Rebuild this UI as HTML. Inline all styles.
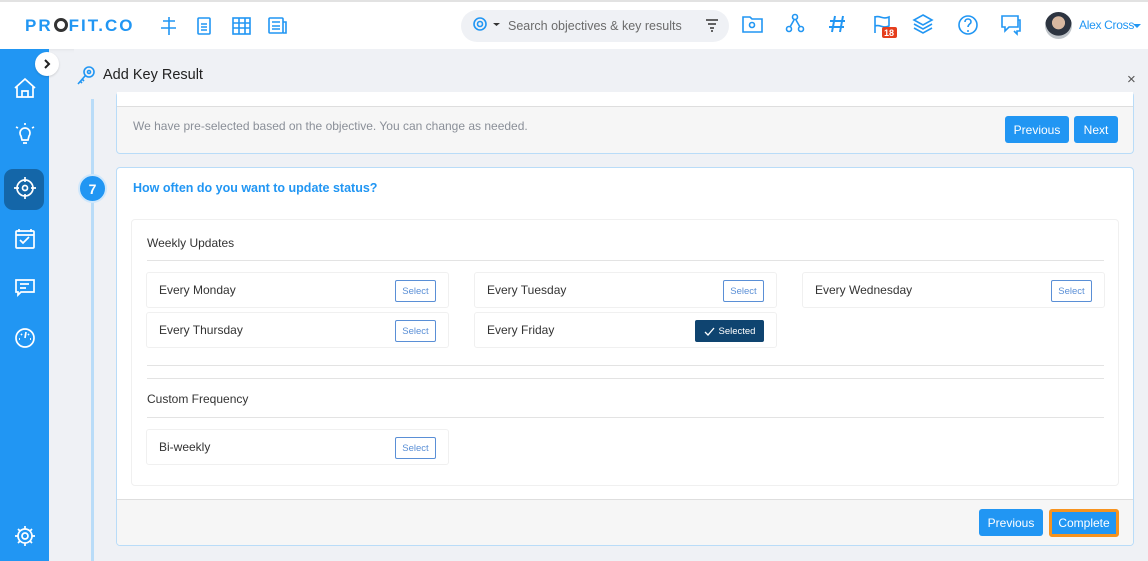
<!DOCTYPE html>
<html><head><meta charset="utf-8"><style>
*{box-sizing:border-box;margin:0;padding:0}
body{width:1148px;height:561px;overflow:hidden;background:#eff1f5;font-family:"Liberation Sans",sans-serif;position:relative;color:#222}
.abs{position:absolute}
.top{left:0;top:0;width:1148px;height:49px;background:#fff;border-top:2px solid #e2e2e2;box-shadow:0 1px 3px rgba(0,0,0,.06)}
.side{left:0;top:49px;width:49px;height:512px;background:#2196f3}
.ic{stroke:#2196f3;fill:none;stroke-width:1.6}
.sic{stroke:#fff;fill:none;stroke-width:1.7}
.card{background:#fff;border:1px solid #b9dcf8;border-radius:4px}
.btn{background:#2196f3;color:#fff;font-size:12px;border-radius:3px;display:flex;align-items:center;justify-content:center}
.item{background:#fff;border:1px solid #f0f0f0;border-radius:3px;height:36px;width:303px;font-size:12px;color:#333;padding-left:12px;display:flex;align-items:center}
.sel{position:absolute;right:12px;top:7px;width:41px;height:22px;border:1px solid #5a8fd6;border-radius:2px;font-size:9.5px;color:#5a8fd6;display:flex;align-items:center;justify-content:center}
.line{height:1px;background:#e3e3e3}
</style></head><body>
<div class="abs top">
 <div class="abs" style="left:25px;top:14px;font-size:17px;font-weight:bold;color:#2196f3;letter-spacing:2px">PR<span style="display:inline-block;width:14px;height:14px;border:3px solid #333;border-radius:50%;vertical-align:-1px;margin:0 1px"></span>FIT.CO</div>
 <svg class="abs" style="left:160px;top:13px" width="140" height="22">
  <g class="ic"><path d="M9 2v18M3 6h12M1 13h15"/><rect x="38" y="3" width="12" height="16" rx="1"/><path d="M41 9h6M41 12h6M41 15h6"/><rect x="73" y="3" width="17" height="16"/><path d="M73 8h17M73 13h17M79 3v16M85 3v16"/><rect x="109" y="3" width="14" height="15" rx="1"/><path d="M123 7h3v11h-3M112 7h8M112 11h8M112 14h8"/></g>
 </svg>
 <div class="abs" style="left:461px;top:8px;width:268px;height:32px;background:#eff1f5;border-radius:16px"></div>
 <svg class="abs" style="left:472px;top:14px" width="30" height="20"><circle cx="8" cy="8" r="6" class="ic"/><circle cx="8" cy="8" r="2.5" class="ic"/><path d="M21 7h7l-3.5 3z" fill="#333"/></svg>
 <div class="abs" style="left:508px;top:17px;font-size:12.5px;color:#6b6b6b">Search objectives &amp; key results</div>
 <svg class="abs" style="left:705px;top:16px" width="14" height="14"><path d="M1 2h12M3 6h8M5 10h4M6 13h2" stroke="#333" stroke-width="1.6"/></svg>
 <svg class="abs" style="left:740px;top:10px" width="290" height="30"><g class="ic">
  <path d="M3 5h7l2 2h10v13H3z"/><circle cx="12" cy="13" r="2.5"/>
  <circle cx="55" cy="5" r="2.5"/><circle cx="49" cy="17" r="2.5"/><circle cx="61" cy="17" r="2.5"/><path d="M54 8l-4 7M56 8l4 7"/>
  <path d="M95 4l-3 16M103 4l-3 16M90 9h15M89 15h15" stroke-width="2"/>
  <path d="M135 4v17M135 5c5-2 8 3 14 0v9c-6 3-9-2-14 0"/>
  <path d="M183 3l9 5-9 5-9-5zM174 12l9 5 9-5M174 16l9 5 9-5"/>
  <circle cx="228" cy="13" r="9"/><path d="M225 10c0-4 6-4 6 0 0 2-3 2-3 5"/>
  <path d="M262 4h16v11h-9l-4 4v-4h-3z"/><path d="M278 8h2v11h-3v3l-3-3"/>
 </g><circle cx="228" cy="19" r="1" fill="#2196f3"/><rect x="142" y="15" width="15" height="11" rx="2" fill="#e53e1d"/><text x="144" y="24" font-size="9" font-weight="bold" fill="#fff" font-family="Liberation Sans">18</text></svg>
 <div class="abs" style="left:1045px;top:10px;width:27px;height:27px;border-radius:50%;background:radial-gradient(circle at 50% 40%,#d8b8a0 0 30%,#2d3440 32% 60%,#bfc4c9 62%)"></div>
 <div class="abs" style="left:1079px;top:16px;font-size:12px;color:#2196f3;letter-spacing:-0.3px">Alex Cross</div>
 <div class="abs" style="left:1133px;top:22px;border:4px solid transparent;border-top-color:#2196f3"></div>
</div>
<div class="abs side"></div>
<div class="abs" style="left:4px;top:169px;width:40px;height:41px;background:#1466a8;border-radius:9px"></div>
<svg class="abs" style="left:10px;top:76px" width="30" height="480"><g class="sic">
 <path d="M5 12l10-9 10 9M7 10v11h16V10M12 21v-6h6v6"/>
 <path d="M11 60a5 5 0 1 1 8 0l-1 4h-6zM13 67h4M15 49v-2M8 52l-2-1M22 52l2-1"/>
 <circle cx="15" cy="112" r="8"/><circle cx="15" cy="112" r="2.5"/><path d="M15 101v5M15 118v5M4 112h5M21 112h5"/>
 <rect x="6" y="155" width="18" height="17" rx="1"/><path d="M6 159h18M10 164l3 3 6-6M9 153v3M21 153v3"/>
 <path d="M6 204h18v12h-13l-3 3v-3h-2z"/><path d="M10 208h9M10 212h6"/>
 <circle cx="15" cy="262" r="9"/><path d="M15 262l1-6M11 258l1 1M19 258l-1 1M9 263h1M20 263h1"/>
 <circle cx="15" cy="460" r="3"/><path d="M15 450v3M15 467v3M5 460h3M22 460h3M8 453l2 2M20 465l2 2M8 467l2-2M20 455l2-2"/><circle cx="15" cy="460" r="7"/>
</g></svg>
<div class="abs" style="left:35px;top:52px;width:24px;height:24px;background:#fff;border-radius:50%;box-shadow:0 1px 2px rgba(0,0,0,.15)"></div>
<svg class="abs" style="left:41px;top:58px" width="12" height="12"><path d="M4 2l4 4-4 4" stroke="#222" stroke-width="2" fill="none"/></svg>
<div class="abs" style="left:74px;top:49px;width:1074px;height:50px;background:#eff1f5"></div>
<svg class="abs" style="left:76px;top:65px" width="22" height="22"><g class="ic"><circle cx="13" cy="7" r="5"/><circle cx="13" cy="7" r="1.5"/><path d="M9 11l-7 8M4 16l2 2M6 14l2 2"/></g></svg>
<div class="abs" style="left:103px;top:67px;font-size:14.5px;color:#222">Add Key Result</div>
<div class="abs" style="left:1127px;top:71px;font-size:15px;color:#555">×</div>
<div class="abs" style="left:91px;top:99px;width:3px;height:462px;background:#b9dcf8"></div>
<div class="abs card" style="left:116px;top:92px;width:1018px;height:62px;border-top:none;background:#f6f6f6">
 <div style="height:15px;background:#fff;border-bottom:1px solid #dedede"></div>
 <div class="abs" style="left:16px;top:27px;font-size:12px;color:#8a8f98">We have pre-selected based on the objective. You can change as needed.</div>
 <div class="abs btn" style="left:888px;top:24px;width:64px;height:27px">Previous</div>
 <div class="abs btn" style="left:957px;top:24px;width:44px;height:27px">Next</div>
</div>
<div class="abs" style="left:78px;top:174px;width:29px;height:29px;border-radius:50%;background:#2196f3;border:2px solid #cfe7fb;color:#fff;font-weight:bold;font-size:14px;display:flex;align-items:center;justify-content:center">7</div>
<div class="abs card" style="left:116px;top:167px;width:1018px;height:379px;overflow:hidden">
 <div class="abs" style="left:16px;top:13px;font-size:12.5px;font-weight:bold;color:#2196f3">How often do you want to update status?</div>
 <div class="abs" style="left:14px;top:51px;width:988px;height:267px;border:1px solid #f0f0f0;border-radius:4px">
  <div class="abs" style="left:15px;top:16px;font-size:12px;color:#333">Weekly Updates</div>
  <div class="abs line" style="left:15px;top:40px;width:957px"></div>
  <div class="abs item" style="left:14px;top:52px">Every Monday<div class="sel">Select</div></div>
  <div class="abs item" style="left:342px;top:52px">Every Tuesday<div class="sel">Select</div></div>
  <div class="abs item" style="left:670px;top:52px">Every Wednesday<div class="sel">Select</div></div>
  <div class="abs item" style="left:14px;top:92px">Every Thursday<div class="sel">Select</div></div>
  <div class="abs item" style="left:342px;top:92px">Every Friday<div class="sel" style="width:69px;background:#0f4470;border-color:#0f4470;color:#fff;gap:4px"><svg width="11" height="9"><path d="M1 5l3 3 6-7" stroke="#fff" stroke-width="1.3" fill="none"/></svg>Selected</div></div>
  <div class="abs line" style="left:15px;top:145px;width:957px"></div>
  <div class="abs line" style="left:15px;top:158px;width:957px"></div>
  <div class="abs" style="left:15px;top:172px;font-size:12px;color:#333">Custom Frequency</div>
  <div class="abs line" style="left:15px;top:197px;width:957px"></div>
  <div class="abs item" style="left:14px;top:209px">Bi-weekly<div class="sel">Select</div></div>
 </div>
 <div class="abs" style="left:0;top:331px;width:1018px;height:48px;background:#f6f6f6;border-top:1px solid #dedede"></div>
 <div class="abs btn" style="left:862px;top:341px;width:64px;height:27px">Previous</div>
 <div class="abs btn" style="left:932px;top:341px;width:70px;height:28px;border:3px solid #f7931e">Complete</div>
</div>
</body></html>
